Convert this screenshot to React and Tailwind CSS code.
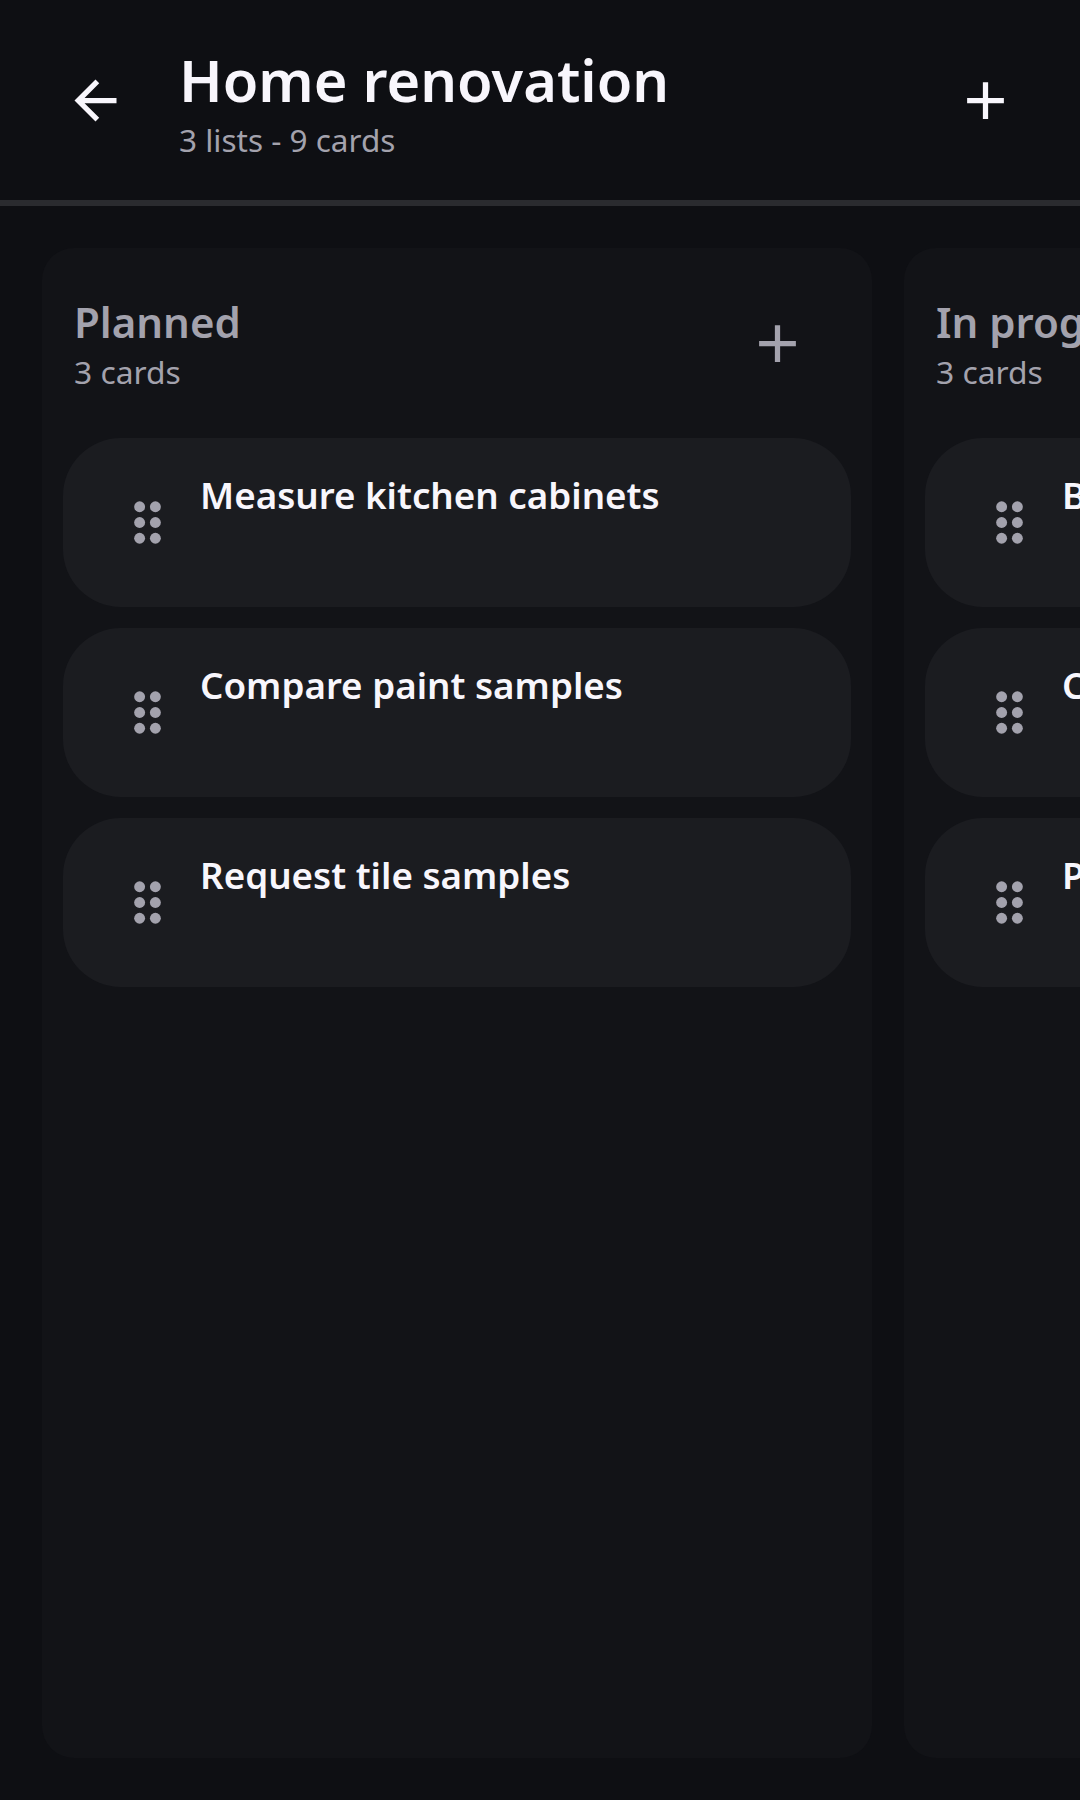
const lists = [
  { name: "Planned", cards: ["Measure kitchen cabinets", "Compare paint samples", "Request tile samples"] },
  { name: "In progress", cards: ["Book electrician visit", "Collect contractor quotes", "Prepare bathroom walls"] },
];

function AddIcon({ className }) {
  return (
    <svg viewBox="0 0 24 24" className={className} fill="currentColor">
      <path d="M19 13h-6v6h-2v-6H5v-2h6V5h2v6h6v2z" />
    </svg>
  );
}

function BackIcon({ className }) {
  return (
    <svg viewBox="0 0 24 24" className={className} fill="currentColor">
      <path d="M20 11H7.83l5.59-5.59L12 4l-8 8 8 8 1.41-1.41L7.83 13H20v-2z" />
    </svg>
  );
}

function Grip() {
  return (
    <svg viewBox="0 0 24 24" className="w-[63px] h-[63px] shrink-0 self-center text-[#a3a2ad]" fill="currentColor">
      <circle cx="9" cy="6" r="2.08" />
      <circle cx="15" cy="6" r="2.08" />
      <circle cx="9" cy="12" r="2.08" />
      <circle cx="15" cy="12" r="2.08" />
      <circle cx="9" cy="18" r="2.08" />
      <circle cx="15" cy="18" r="2.08" />
    </svg>
  );
}

function Card({ title }) {
  return (
    <div className="h-[169px] flex items-start rounded-[58px] bg-[#1b1c20] pl-[53px] pr-6">
      <Grip />
      <div className="ml-[21px] mt-[33px] text-[36.75px] leading-[48px] font-semibold text-[#f8f6fc] whitespace-nowrap">{title}</div>
    </div>
  );
}

function List({ list }) {
  return (
    <div className="w-[830px] shrink-0 rounded-[32px] bg-[#121317] px-[21px]">
      <div className="flex items-start justify-between pl-[11px] pr-[42px] h-[190px]">
        <div className="pt-[42px]">
          <div className="text-[42px] leading-[64px] font-semibold text-[#a3a2ad] whitespace-nowrap">{list.name}</div>
          <div className="text-[31.8px] leading-[36px] text-[#a3a2ad]">{list.cards.length} cards</div>
        </div>
        <AddIcon className="w-[63px] h-[63px] mt-[64px] shrink-0 text-[#a3a2ad]" />
      </div>
      <div className="flex flex-col gap-[21px]">
        {list.cards.map((c) => (
          <Card key={c} title={c} />
        ))}
      </div>
    </div>
  );
}

export default function App() {
  return (
    <div className="w-[1080px] h-[1800px] overflow-hidden flex flex-col bg-[#0e0f13] font-['Noto_Sans',sans-serif]">
      <header className="h-[200px] shrink-0 flex items-center pl-[64px] pr-[63px]">
        <BackIcon className="w-[63px] h-[63px] text-[#f8f6fc] shrink-0" />
        <div className="ml-[52px] flex-1">
          <h1 className="text-[57.75px] leading-[80px] font-semibold text-[#f8f6fc]">Home renovation</h1>
          <p className="text-[31.5px] leading-[40px] text-[#a3a2ad]">3 lists - 9 cards</p>
        </div>
        <AddIcon className="w-[63px] h-[63px] text-[#f8f6fc] shrink-0" />
      </header>
      <div className="h-[6px] shrink-0 bg-[#2a2b2f]" />
      <main className="flex-1 min-h-0 flex gap-8 pl-[42px] pt-[42px] pb-[42px]">
        {lists.map((l) => (
          <List key={l.name} list={l} />
        ))}
      </main>
    </div>
  );
}
